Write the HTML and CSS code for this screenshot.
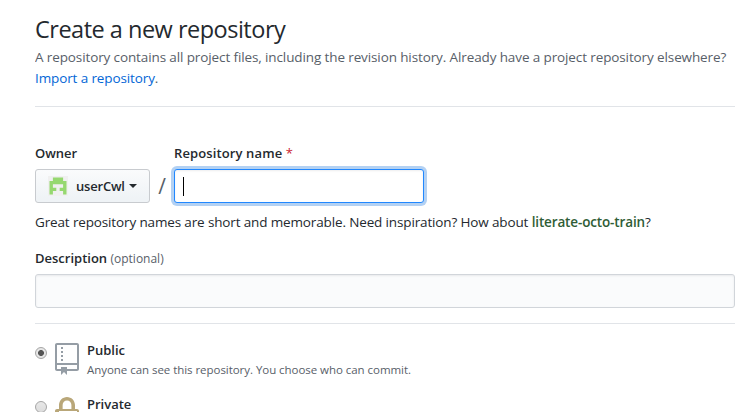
FILE: index.html
```
<!DOCTYPE html>
<html lang="en">
<head>
<meta charset="utf-8">
<title>Create a new repository</title>
<link rel="stylesheet" href="styles.css">
</head>
<body>
<main class="page">
  <header class="head">
    <h1 class="title"><span>Create a new repository</span></h1>
    <p class="lead"><span class="lead-text">A repository contains all project files, including the revision history. Already have a project repository elsewhere?</span><br><a class="link" href="#">Import a repository</a>.</p>
  </header>
  <form class="form">
    <div class="name-row">
      <div class="field">
        <div class="label">Owner</div>
        <button class="owner" type="button">
          <svg class="avatar" viewBox="0 0 20 20"><path fill="#f0f0f0" d="M0 0h20v20H0z"/><path fill="#96d870" fill-rule="evenodd" d="M4.900 1.500h10.200v3.400h3.400v13.600h-3.400v-3.400h-3.400v-3.400h3.400V8.300H4.900v3.400h3.400v3.400H4.900v3.400H1.500V4.900h3.400z"/></svg>
          <span class="owner-name">userCwl</span><span class="caret"></span>
        </button>
      </div>
      <div class="slash">/</div>
      <div class="field">
        <div class="label repo-label">Repository name <span class="required">*</span></div>
        <div class="input focused"><span class="cursor"></span></div>
      </div>
    </div>
    <p class="hint">Great repository names are short and memorable. Need inspiration? How about <strong class="suggestion">literate-octo-train</strong>?</p>
    <div class="label desc-label">Description <span class="optional">(optional)</span></div>
    <div class="input wide"></div>
    <div class="choices">
      <div class="choice">
        <span class="radio checked"></span>
        <svg class="icon repo" viewBox="0 0 12 16"><path d="M4 9H3V8h1v1zm0-3H3v1h1V6zm0-2H3v1h1V4zm0-2H3v1h1V2zm8-1v12c0 .55-.45 1-1 1H6v2l-1.500-1.500L3 16v-2H1c-.55 0-1-.45-1-1V1c0-.55.45-1 1-1h10c.55 0 1 .45 1 1zm-1 10H1v2h2v-1h3v1h5v-2zm0-10H1v9h10V1z"/></svg>
        <div><div class="choice-name">Public</div><div class="note">Anyone can see this repository. You choose who can commit.</div></div>
      </div>
      <div class="choice">
        <span class="radio"></span>
        <svg class="icon lock" viewBox="0 0 12 16"><path d="M4 13H3v-1h1v1zm8-6v7c0 .55-.45 1-1 1H1c-.55 0-1-.45-1-1V7c0-.55.45-1 1-1h1V4c0-2.200 1.800-4 4-4s4 1.800 4 4v2h1c.55 0 1 .45 1 1zM3.800 6h4.410V4c0-1.220-.98-2.200-2.200-2.200-1.220 0-2.200.98-2.200 2.200v2H3.800zM11 7H2v7h9V7zM4 8H3v1h1V8zm0 2H3v1h1v-1z"/></svg>
        <div><div class="choice-name">Private</div></div>
      </div>
    </div>
  </form>
</main>
</body>
</html>
```
FILE: styles.css
```
* { box-sizing: border-box; }
html, body { height: 100%; }
body { margin: 0; overflow: hidden; background: #fff; color: #24292e; font: 14px/21px "Open Sans", "Noto Sans", sans-serif; }
.page { width: 707px; height: 100%; margin-left: 35px; padding-top: 12px; overflow: hidden; }
.head { width: 700px; height: 95px; border-bottom: 1px solid #e1e4e8; white-space: nowrap; }
.title { margin: 0; font-size: 23.500px; line-height: 35px; font-weight: 400; letter-spacing: -0.5px; }
.lead { margin: 0; color: #586069; font-size: 13.500px; letter-spacing: -0.115px; }
.link { color: #0366d6; text-decoration: none; }
.form { display: block; }
.name-row { display: flex; padding-top: 36px; }
.label { height: 26px; font-size: 13px; font-weight: 600; white-space: nowrap; }
.repo-label { letter-spacing: 0.12px; }
.required { color: #cb2431; font-weight: 400; }
.owner { display: flex; align-items: center; width: 115px; height: 34px; padding: 0 12px; border: 1px solid #c8cbcf; border-radius: 3px; background: linear-gradient(#fafbfc, #eff3f6 90%); font: 600 13px/20px "Open Sans", sans-serif; letter-spacing: -0.2px; color: #24292e; }
.avatar { flex: none; width: 20px; height: 20px; margin-right: 8px; }
.caret { flex: none; margin-left: 4px; border: 4px solid transparent; border-top-color: #24292e; border-bottom-width: 0; }
.slash { width: 24px; padding-top: 33px; text-align: center; font-size: 21px; color: #586069; }
.input { display: flex; align-items: center; width: 250px; height: 34px; padding: 0 8px; border: 1px solid #d1d5da; border-radius: 3px; background: #fff; box-shadow: inset 0 1px 2px rgba(27,31,35,.075); }
.focused { border-color: #2188ff; box-shadow: inset 0 1px 2px rgba(27,31,35,.075), 0 0 0 3px rgba(3,102,214,.3); }
.wide { width: 700px; background: #fafbfc; }
.cursor { width: 1px; height: 19px; background: #000; }
.hint { margin: 9px 0 0; font-size: 13.500px; letter-spacing: -0.14px; white-space: nowrap; }
.suggestion { color: #2f5d36; font-weight: 600; }
.desc-label { margin-top: 15px; }
.optional { color: #586069; font-size: 12px; font-weight: 400; }
.choices { width: 700px; margin-top: 15px; border-top: 1px solid #e1e4e8; padding-top: 16px; }
.choice { display: flex; height: 54px; white-space: nowrap; }
.radio { flex: none; width: 12px; height: 12px; margin: 7px 8px 0 0; border: 1px solid #a5a5a5; border-radius: 50%; background: linear-gradient(#e8e8e8, #dcdcdc); }
.checked { background: radial-gradient(circle, #555 0 2.600px, #e6e6e6 3.300px); }
.icon { flex: none; width: 24px; height: 32px; margin: 3px 8px 0 0; }
.repo { fill: #959da5; }
.lock { fill: #b9a779; }
.choice-name { font-size: 13px; font-weight: 600; }
.note { font-size: 11.500px; line-height: 18px; letter-spacing: -0.045px; color: #586069; }
```
